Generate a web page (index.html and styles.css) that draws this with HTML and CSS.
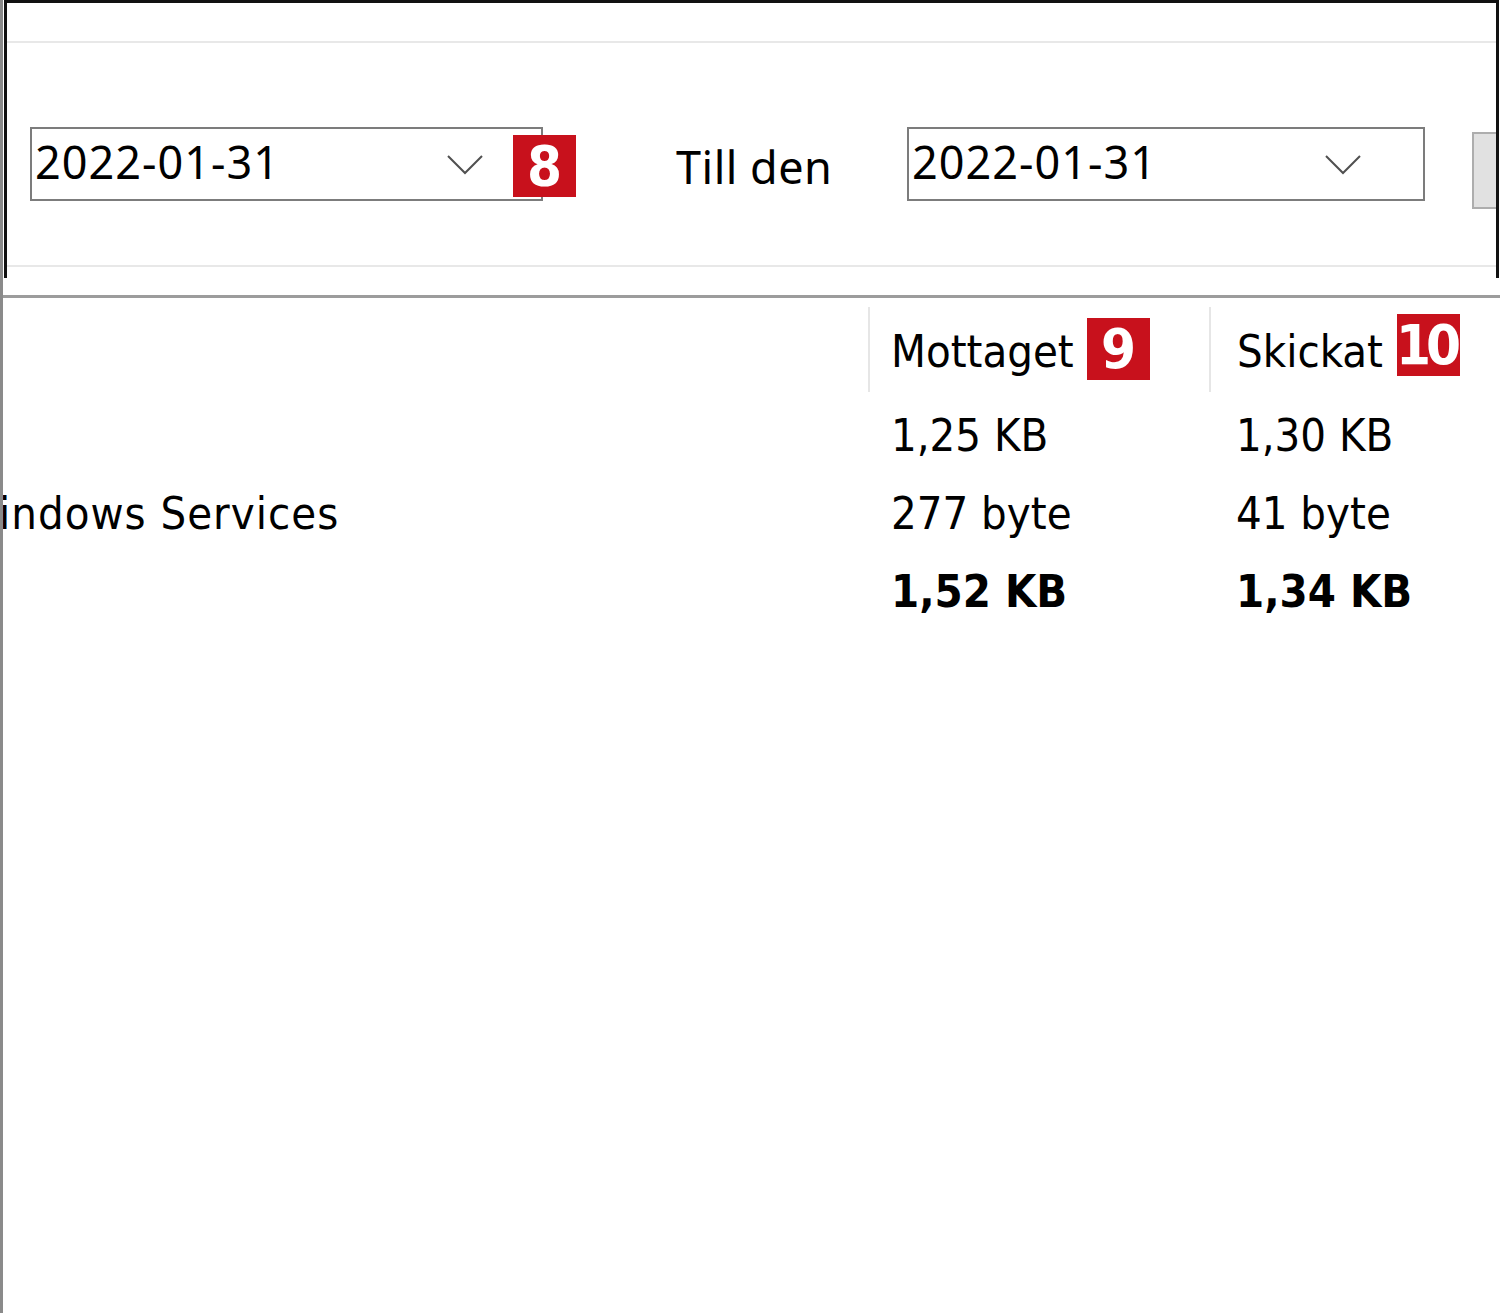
FILE: index.html
```html
<!DOCTYPE html>
<html lang="sv">
<head>
    <meta charset="UTF-8">
    <title>Dataanvändning</title>
    <link rel="stylesheet" href="styles.css">
</head>
<body>
    <div class="window">
        <div class="toolbar">
            <div class="focus-frame">
                <div class="band">
                    <div class="field field-from">
                        <span class="field-text">2022-01-31</span>
                        <svg class="chevron" width="36" height="20" viewBox="0 0 36 20"><polyline points="1,1 18,18 35,1" fill="none" stroke="#505050" stroke-width="2"/></svg>
                        <span class="badge badge-8">8</span>
                    </div>
                    <span class="label">Till den</span>
                    <div class="field field-to">
                        <span class="field-text">2022-01-31</span>
                        <svg class="chevron" width="36" height="20" viewBox="0 0 36 20"><polyline points="1,1 18,18 35,1" fill="none" stroke="#505050" stroke-width="2"/></svg>
                    </div>
                    <div class="btn"></div>
                </div>
            </div>
        </div>

        <div class="list">
            <div class="list-head">
                <div class="head-cell"></div>
                <div class="head-cell sep col-recv">Mottaget <span class="badge badge-9">9</span></div>
                <div class="head-cell sep col-sent">Skickat <span class="badge badge-10">10</span></div>
            </div>
            <div class="list-body">
                <div class="row">
                    <div class="cell name"></div>
                    <div class="cell recv">1,25 KB</div>
                    <div class="cell sent">1,30 KB</div>
                </div>
                <div class="row">
                    <div class="cell name"><span class="name-text">Windows Services</span></div>
                    <div class="cell recv">277 byte</div>
                    <div class="cell sent">41 byte</div>
                </div>
                <div class="row total">
                    <div class="cell name"></div>
                    <div class="cell recv">1,52 KB</div>
                    <div class="cell sent">1,34 KB</div>
                </div>
            </div>
        </div>
    </div>
</body>
</html>
```

FILE: styles.css
```css
body {
    margin: 0;
    background-color: #fff;
    font-family: 'DejaVu Sans Condensed', 'DejaVu Sans', sans-serif;
    color: #000;
}
.window {
    width: 1500px;
    height: 1313px;
    box-sizing: border-box;
    border-left: 3px solid #8a8a8a;
    overflow: hidden;
    background-color: #fff;
}

/* date range toolbar */
.toolbar {
    height: 298px;
    box-sizing: border-box;
    border-bottom: 3px solid #9c9c9c;
}
.focus-frame {
    margin-left: 1px;
    width: 1495px;
    height: 278px;
    box-sizing: border-box;
    border: 3px solid #111;
    border-bottom: none;
    padding-top: 38px;
    overflow: hidden;
}
.band {
    height: 226px;
    box-sizing: border-box;
    border-top: 2px solid #e8e8e8;
    border-bottom: 2px solid #e8e8e8;
    display: flex;
    align-items: flex-start;
    padding-top: 84px;
    padding-left: 23px;
}
.field {
    flex-shrink: 0;
    position: relative;
    height: 74px;
    box-sizing: border-box;
    border: 2px solid #7c7c7c;
    display: flex;
    align-items: center;
    padding-left: 3px;
    background-color: #fff;
}
.field-from {
    width: 513px;
}
.field-to {
    width: 518px;
}
.field-text {
    font-family: 'Noto Sans', 'Open Sans', sans-serif;
    font-size: 45px;
    line-height: 60px;
    letter-spacing: 1px;
    margin-top: -4px;
}
.chevron {
    margin-left: auto;
    margin-right: 58px;
    margin-top: 2px;
}
.field-to .chevron {
    margin-right: 62px;
}
.label {
    flex: 0 0 231px;
    margin-left: 133px;
    font-family: 'Noto Sans', 'Open Sans', sans-serif;
    font-size: 45px;
    line-height: 60px;
    letter-spacing: 0.5px;
    margin-top: 10px;
}
.btn {
    flex-shrink: 0;
    width: 60px;
    height: 77px;
    box-sizing: border-box;
    margin-left: 47px;
    margin-top: 5px;
    background-color: #e1e1e1;
    border: 2px solid #adadad;
}

/* red step badges */
.badge {
    position: absolute;
    width: 63px;
    height: 62px;
    background-color: #c8111c;
    color: #fff;
    font-family: 'DejaVu Sans Condensed', 'DejaVu Sans', sans-serif;
    font-weight: bold;
    font-size: 56px;
    line-height: 62px;
    text-align: center;
}
.badge-8 {
    left: 481px;
    top: 6px;
}
.badge-9 {
    left: 217px;
    top: 11px;
}
.badge-10 {
    left: 186px;
    top: 7px;
    letter-spacing: -5px;
    text-indent: -5px;
}

/* usage list */
.list-head,
.row {
    display: grid;
    grid-template-columns: 865px 341px 1fr;
}
.head-cell {
    position: relative;
    margin-top: 9px;
    height: 85px;
    box-sizing: border-box;
    padding-top: 19px;
    font-size: 45px;
    line-height: 52px;
    white-space: nowrap;
}
.head-cell.sep {
    border-left: 2px solid #e6e6e6;
}
.col-recv {
    padding-left: 21px;
}
.col-sent {
    padding-left: 26px;
}
.list-body {
    padding-top: 5px;
}
.cell {
    height: 78px;
    font-size: 45px;
    line-height: 78px;
    white-space: nowrap;
    overflow: hidden;
}
.recv {
    padding-left: 23px;
}
.sent {
    padding-left: 27px;
}
.name-text {
    display: inline-block;
    margin-left: -44px;
    letter-spacing: 1px;
}
.total .cell {
    font-weight: bold;
}
```
